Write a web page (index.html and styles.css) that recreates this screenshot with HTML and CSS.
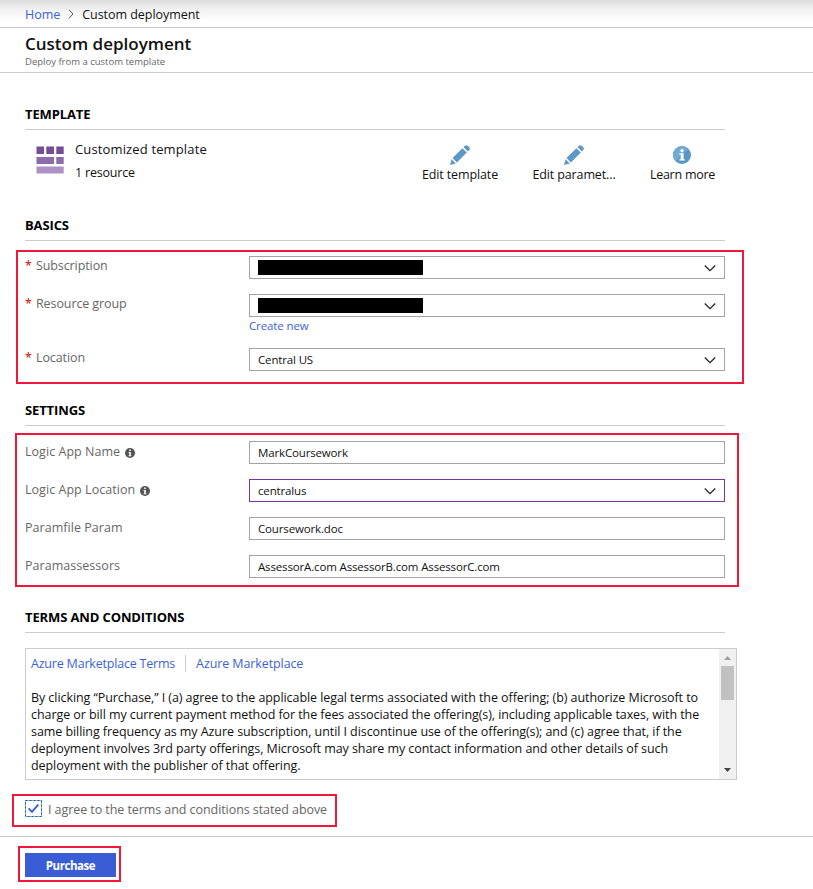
FILE: index.html
```
<!DOCTYPE html>
<html lang="en">
<head>
<meta charset="utf-8">
<title>Custom deployment</title>
<link rel="stylesheet" href="styles.css">
</head>
<body>
<svg class="defs" width="0" height="0">
  <symbol id="chevron" viewBox="0 0 12 8"><path d="M.8 1.5 6 6.7 11.2 1.5" fill="none" stroke="#222" stroke-width="1.3"/></symbol>
  <symbol id="pencil" viewBox="0 0 20 20">
    <path d="M0 20 1.6 14.2 5.8 18.4Z" fill="#5c97c8"/>
    <path d="M2.5 13.1 12.4 3.2 16.8 7.6 6.9 17.5Z" fill="#5c97c8"/>
    <path d="M13.5 2.1 14.9.8Q16.4-.5 18 1L19 2Q20.6 3.6 19.2 5.1L17.9 6.5Z" fill="#5c97c8"/>
  </symbol>
  <symbol id="info" viewBox="0 0 10 10">
    <circle cx="5" cy="5" r="5" fill="#555"/>
    <path d="M4.2 1.6H5.8V3H4.2ZM3.6 4H5.8V7.4H6.5V8.3H3.5V7.4H4.2V4.9H3.6Z" fill="#fff"/>
  </symbol>
</svg>

<nav class="crumbs">
  <a class="link" href="#">Home</a>
  <svg class="sep" viewBox="0 0 6 10"><path d="M1 .8 5 5 1 9.2" fill="none" stroke="#555"/></svg>
  <span>Custom deployment</span>
</nav>
<header class="title">
  <h1>Custom deployment</h1>
  <p>Deploy from a custom template</p>
</header>

<main>
  <h2>TEMPLATE</h2>
  <div class="template">
    <svg class="tiles" viewBox="0 0 28 28">
      <path d="M.5.5H8V8H.5ZM10.3.5H18V8H10.3ZM20.3.5H27.7V8H20.3Z" fill="#754c97"/>
      <path d="M.5 11H18V18H.5ZM20.3 11H27.7V18H20.3Z" fill="#8e6cab"/>
      <path d="M.5 20.5H27.7V27.5H.5Z" fill="#ad91c2"/>
    </svg>
    <div class="summary">
      <div class="name">Customized template</div>
      <div class="count">1 resource</div>
    </div>
    <div class="actions">
      <a class="action edit"><svg viewBox="0 0 20 20"><use href="#pencil"/></svg><span>Edit template</span></a>
      <a class="action params"><svg viewBox="0 0 20 20"><use href="#pencil"/></svg><span>Edit paramet...</span></a>
      <a class="action learn"><svg viewBox="0 0 20 20">
        <circle cx="10" cy="10" r="9" fill="#5a96c6"/>
        <path d="M3.6 16.4A9 9 0 0 1 16.4 3.6Z" fill="#73abd3"/>
        <circle cx="10" cy="5.6" r="1.6" fill="#fff"/>
        <path d="M7.4 8.2H11.6V14.2H12.8V15.5H7.4V14.2H8.7V9.4H7.4Z" fill="#fff"/>
      </svg><span>Learn more</span></a>
    </div>
  </div>

  <h2>BASICS</h2>
  <div class="frame basics">
    <div class="row">
      <label class="required">Subscription</label>
      <div class="field"><span class="redacted"></span><svg class="chev"><use href="#chevron"/></svg></div>
    </div>
    <div class="row group">
      <label class="required">Resource group</label>
      <div class="control">
        <div class="field"><span class="redacted"></span><svg class="chev"><use href="#chevron"/></svg></div>
        <a class="link create" href="#">Create new</a>
      </div>
    </div>
    <div class="row">
      <label class="required">Location</label>
      <div class="field">Central US<svg class="chev"><use href="#chevron"/></svg></div>
    </div>
  </div>

  <h2>SETTINGS</h2>
  <div class="frame settings">
    <div class="row">
      <label>Logic App Name<svg class="hint" viewBox="0 0 10 10"><use href="#info"/></svg></label>
      <div class="field">MarkCoursework</div>
    </div>
    <div class="row">
      <label>Logic App Location<svg class="hint" viewBox="0 0 10 10"><use href="#info"/></svg></label>
      <div class="field active">centralus<svg class="chev"><use href="#chevron"/></svg></div>
    </div>
    <div class="row">
      <label>Paramfile Param</label>
      <div class="field">Coursework.doc</div>
    </div>
    <div class="row">
      <label>Paramassessors</label>
      <div class="field">AssessorA.com AssessorB.com AssessorC.com</div>
    </div>
  </div>

  <h2>TERMS AND CONDITIONS</h2>
  <div class="terms">
    <div class="legal">
      <div class="links"><a class="link" href="#">Azure Marketplace Terms</a><a class="link" href="#">Azure Marketplace</a></div>
      <p>By clicking “Purchase,” I (a) agree to the applicable legal terms associated with the offering; (b) authorize Microsoft to<br>
      charge or bill my current payment method for the fees associated the offering(s), including applicable taxes, with the<br>
      same billing frequency as my Azure subscription, until I discontinue use of the offering(s); and (c) agree that, if the<br>
      deployment involves 3rd party offerings, Microsoft may share my contact information and other details of such<br>
      deployment with the publisher of that offering.</p>
    </div>
    <div class="scrollbar">
      <svg viewBox="0 0 7 4"><path d="M0 4 3.5 0 7 4Z" fill="#a0a0a0"/></svg>
      <div class="thumb"></div>
      <svg class="down" viewBox="0 0 7 4"><path d="M0 0H7L3.5 4Z" fill="#444"/></svg>
    </div>
  </div>
  <div class="frame agree">
    <span class="check"><svg viewBox="0 0 17 17"><rect x=".5" y=".5" width="16" height="16" fill="#fff" stroke="#7cc0ee"/><rect x=".5" y=".5" width="16" height="16" fill="none" stroke="#26588f" stroke-dasharray="2 2"/><path d="M3.6 8.3 7 11.9 13.3 4.6" fill="none" stroke="#3a5fd9" stroke-width="1.9"/></svg></span>
    <span>I agree to the terms and conditions stated above</span>
  </div>
</main>
<footer>
  <div class="frame buy"><button>Purchase</button></div>
</footer>
</body>
</html>
```
FILE: styles.css
```
* { box-sizing: border-box; }
body { margin: 0; background: #fff; color: #111; font: 12.5px/17px "Open Sans", "Noto Sans", sans-serif; }
h1, h2, p { margin: 0; }
svg { display: block; flex: none; }
.defs { position: absolute; }
.link { color: #3b5fdb; text-decoration: none; }

.crumbs { display: flex; align-items: center; height: 28px; padding: 1px 25px 0; border-bottom: 1px solid #ccc; background: linear-gradient(#dcdcdc, #f4f4f4 11px, #fff 22px); letter-spacing: -.04px; }
.sep { width: 6px; height: 10px; margin: 0 8px; }

.title { height: 45px; padding: 4px 25px 0; border-bottom: 1px solid #ccc; }
.title h1 { font-size: 17px; line-height: 24px; font-weight: 600; }
.title p { color: #666; font-size: 9.5px; line-height: 12px; }

main { padding: 27px 0 0 25px; }
h2 { width: 700px; height: 30px; border-bottom: 1px solid #ccc; font-size: 13px; line-height: 29px; font-weight: 700; letter-spacing: -.12px; color: #000; }

.template { display: flex; width: 700px; height: 81px; padding-top: 8px; }
.tiles { width: 28px; height: 28px; margin: 8px 11px 0 11px; }
.summary { line-height: 23px; }
.name { font-size: 13px; letter-spacing: .14px; }
.count { letter-spacing: -.2px; }
.actions { display: flex; margin-left: auto; padding-top: 7px; }
.action { display: flex; flex-direction: column; align-items: center; width: 86px; white-space: nowrap; letter-spacing: -.12px; }
.action svg { width: 20px; height: 20px; overflow: visible; }
.action span { line-height: 20px; }
.params { margin: 0 23px 0 28px; }
.learn { width: 85px; letter-spacing: -.25px; }
.learn svg { margin-right: 1px; }

.frame { border: 2px solid #f3163b; }
.basics { width: 728px; height: 134px; margin: 9px 0 12px -9px; padding: 4px 0 0 7px; }
.settings { width: 724px; height: 154px; margin: 7px 0 16px -10px; padding: 6px 0 0 8px; }
.row { display: flex; align-items: flex-start; height: 38px; }
.group { height: 54px; }
label { display: flex; align-items: center; width: 224px; height: 18px; color: #666; letter-spacing: -.1px; }
.settings label { letter-spacing: .04px; height: 21px; }
.required::before { content: "*"; width: 11px; color: #d62b2b; font-weight: 600; }
.hint { width: 10px; height: 10px; margin: 3px 0 0 5px; }
.field { display: flex; align-items: center; width: 476px; height: 23px; padding: 0 8px; border: 1px solid #a3a3a3; background: #fff; font-size: 11.5px; letter-spacing: -.15px; }
.active { border-color: #7a35a5; }
.redacted { width: 165px; height: 15px; background: #000; }
.chev { width: 12px; height: 8px; margin: 1px 0 0 auto; }
.create { display: block; line-height: 18px; font-size: 11.5px; letter-spacing: -.12px; }

.terms { display: flex; width: 712px; height: 132px; margin-top: 15px; border: 1px solid #ccc; }
.legal { flex: 1; padding: 6px 0 0 5px; white-space: nowrap; }
.legal p { margin-top: 17px; letter-spacing: -.07px; }
.links { display: flex; letter-spacing: -.2px; }
.links .link + .link { margin-left: 10px; padding-left: 10px; border-left: 1px solid #ccc; letter-spacing: -.1px; }
.scrollbar { display: flex; flex-direction: column; align-items: center; width: 17px; padding: 7px 0; background: #f0f0f0; }
.scrollbar svg { width: 7px; height: 4px; }
.thumb { width: 13px; height: 34px; margin-top: 6px; background: #c1c1c1; }
.scrollbar .down { margin-top: auto; }

.agree { display: flex; align-items: flex-start; width: 325px; height: 33px; margin: 14px 0 9px -13px; padding: 4px 0 0 11px; color: #666; letter-spacing: -.07px; line-height: 19px; white-space: nowrap; }
.check { margin-right: 6px; }
.check svg { width: 17px; height: 17px; }

footer { padding: 9px 0 0 18px; border-top: 1px solid #ccc; }
.buy { width: 103px; height: 36px; padding: 5px 3px 3px 5px; }
.buy button { display: block; width: 91px; height: 24px; padding: 1px 0 0; border: 0; background: #3a5dd6; color: #fff; font: 700 11.5px/24px "Open Sans", "Noto Sans", sans-serif; letter-spacing: -.45px; }
```
